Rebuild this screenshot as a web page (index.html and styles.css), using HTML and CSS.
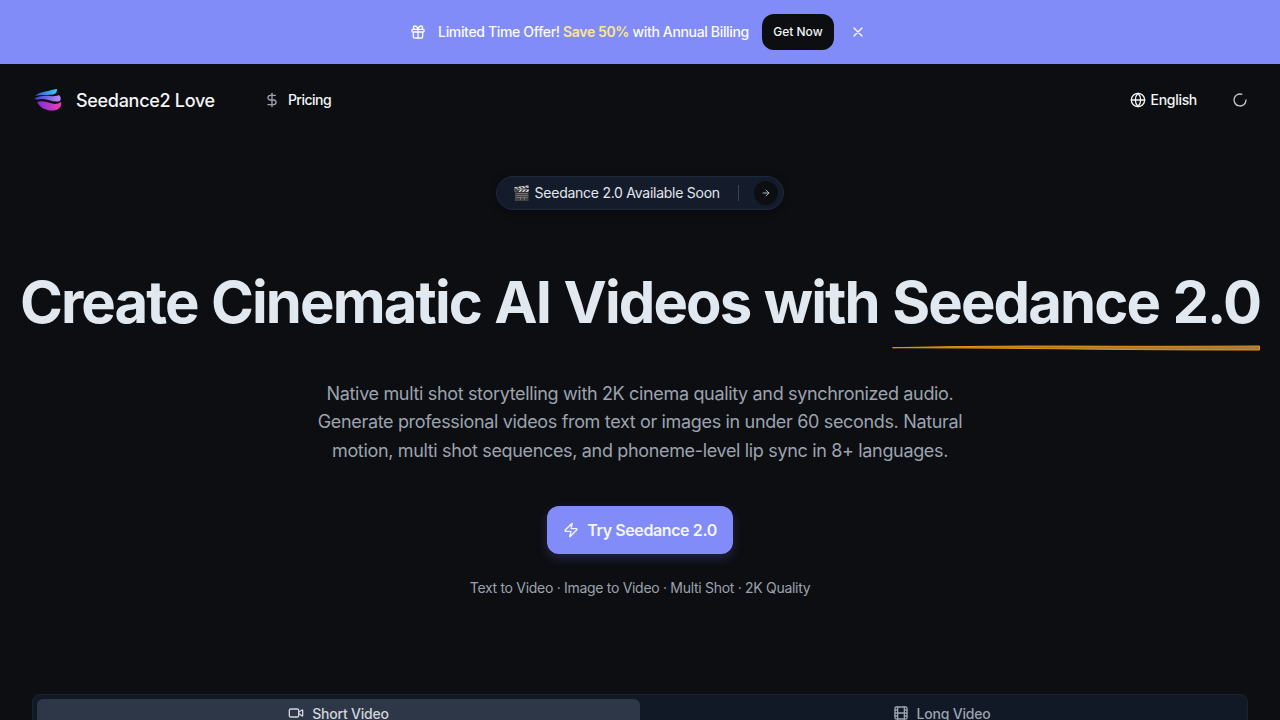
FILE: index.html
```html
<!DOCTYPE html>
<html lang="en">
<head>
<meta charset="utf-8">
<title>Seedance2 Love</title>
<link rel="stylesheet" href="styles.css">
</head>
<body>
<div class="promo">
  <svg class="promo-gift" width="16" height="16" viewBox="0 0 24 24" fill="none" stroke="currentColor" stroke-width="2" stroke-linecap="round" stroke-linejoin="round"><rect x="3" y="8" width="18" height="4" rx="1"/><path d="M12 8v13"/><path d="M19 12v7a2 2 0 0 1-2 2H7a2 2 0 0 1-2-2v-7"/><path d="M7.5 8a2.5 2.5 0 0 1 0-5A4.8 8 0 0 1 12 8a4.8 8 0 0 1 4.500-5 2.500 2.500 0 0 1 0 5"/></svg>
  <span class="promo-text">Limited Time Offer! <b>Save 50%</b> with Annual Billing</span>
  <a class="promo-btn">Get Now</a>
  <svg class="promo-x" width="16" height="16" viewBox="0 0 24 24" fill="none" stroke="currentColor" stroke-width="2" stroke-linecap="round"><path d="M18 6 6 18M6 6l12 12"/></svg>
</div>
<header class="nav">
  <div class="nav-left">
    <a class="brand">
      <svg class="logo" width="32" height="32" viewBox="0 0 32 32">
        <defs>
          <linearGradient id="g1" x1="0" y1="0" x2="1" y2="0"><stop offset="0" stop-color="#3b4fe0"/><stop offset="1" stop-color="#2fd0f5"/></linearGradient>
          <linearGradient id="g2" x1="0" y1="0" x2="1" y2="0"><stop offset="0" stop-color="#2d3fd8"/><stop offset="1" stop-color="#c08bf5"/></linearGradient>
          <linearGradient id="g3" x1="0" y1="0" x2="1" y2="0"><stop offset="0" stop-color="#7a2be0"/><stop offset="1" stop-color="#f43fb0"/></linearGradient>
        </defs>
        <path fill="url(#g1)" d="M3 12C7 8 12 8 16 7c4-1 6-2 9-2 0 3-1 5-4 5.500C15 11.500 8 10 3 12z"/>
        <path fill="url(#g2)" d="M2 15C7 11 13 11.500 18 12c4 .5 7 0 9-1 2 2 2 4 1 6-6 2-12-2-17-2-3 0-6 1-9 0z"/>
        <path fill="url(#g3)" d="M5 18c5-2 10 0 15 1.500 3 1 6 .5 9-1.500 1 3-1 7-5 8-7 2-15-1-19-8z"/>
      </svg>
      <span class="brand-name">Seedance2 Love</span>
    </a>
    <a class="nav-link">
      <svg width="16" height="16" viewBox="0 0 24 24" fill="none" stroke="currentColor" stroke-width="2" stroke-linecap="round" stroke-linejoin="round"><path d="M12 2v20"/><path d="M17 5H9.500a3.500 3.500 0 0 0 0 7h5a3.500 3.500 0 0 1 0 7H6"/></svg>
      <span>Pricing</span>
    </a>
  </div>
  <div class="nav-right">
    <a class="lang">
      <svg width="16" height="16" viewBox="0 0 24 24" fill="none" stroke="currentColor" stroke-width="2" stroke-linecap="round" stroke-linejoin="round"><circle cx="12" cy="12" r="10"/><path d="M12 2a14.500 14.500 0 0 0 0 20 14.500 14.500 0 0 0 0-20"/><path d="M2 12h20"/></svg>
      <span>English</span>
    </a>
    <svg class="spinner" width="16" height="16" viewBox="0 0 24 24" fill="none" stroke="currentColor" stroke-width="2" stroke-linecap="round"><path d="M21 12a9 9 0 1 1-6.200-8.560"/></svg>
  </div>
</header>
<main class="hero">
  <a class="pill">
    <span class="pill-text"><span class="pill-emoji">🎬</span> Seedance 2.0 Available Soon</span>
    <span class="pill-sep"></span>
    <span class="pill-arrow"><svg width="10" height="10" viewBox="0 0 24 24" fill="none" stroke="currentColor" stroke-width="2" stroke-linecap="round" stroke-linejoin="round"><path d="M5 12h14M12 5l7 7-7 7"/></svg></span>
  </a>
  <h1 class="title">Create Cinematic AI Videos with <span class="title-mark">Seedance 2.0<svg class="underline" viewBox="0 0 368 6" preserveAspectRatio="none"><path d="M.5 2.700C60 1.500 120 .8 180 1.100S300 1.400 367.500 1V5C300 5 240 4.700 180 3.900S60 2.900.5 2.700z" fill="#a67c45" stroke="#e8930f" stroke-width="1"/></svg></span></h1>
  <p class="lead">Native multi shot storytelling with 2K cinema quality and synchronized audio.<br>Generate professional videos from text or images in under 60 seconds. Natural<br>motion, multi shot sequences, and phoneme-level lip sync in 8+ languages.</p>
  <a class="cta">
    <svg width="16" height="16" viewBox="0 0 24 24" fill="none" stroke="currentColor" stroke-width="2" stroke-linecap="round" stroke-linejoin="round"><path d="M4 14a1 1 0 0 1-.780-1.630l9.900-10.200a.500.500 0 0 1 .860.460l-1.920 6.020A1 1 0 0 0 13 10h7a1 1 0 0 1 .780 1.630l-9.900 10.200a.500.500 0 0 1-.860-.460l1.920-6.020A1 1 0 0 0 11 14z"/></svg>
    <span>Try Seedance 2.0</span>
  </a>
  <p class="features">Text to Video · Image to Video · Multi Shot · 2K Quality</p>
</main>
<section class="tabs">
  <div class="tab tab-active">
    <svg width="16" height="16" viewBox="0 0 24 24" fill="none" stroke="currentColor" stroke-width="2" stroke-linecap="round" stroke-linejoin="round"><path d="m16 13 5.200 3.500a.500.500 0 0 0 .800-.430V7.870a.500.500 0 0 0-.750-.430L16 10.500"/><rect x="2" y="6" width="14" height="12" rx="2"/></svg>
    <span>Short Video</span>
  </div>
  <div class="tab">
    <svg width="16" height="16" viewBox="0 0 24 24" fill="none" stroke="currentColor" stroke-width="2" stroke-linecap="round" stroke-linejoin="round"><rect x="3" y="3" width="18" height="18" rx="2"/><path d="M7 3v18M17 3v18M3 12h18M3 7.500h4M3 16.500h4M17 7.500h4M17 16.500h4"/></svg>
    <span>Long Video</span>
  </div>
</section>
</body>
</html>
```
FILE: styles.css
```css
* { box-sizing: border-box; }
html, body { margin: 0; height: 720px; overflow: hidden; }
body { background: #0c0e12; color: #f4f5f7; font-family: Inter, "Liberation Sans", sans-serif; }
a { color: inherit; text-decoration: none; }
svg { display: block; flex: none; }

.promo { height: 64px; padding-right: 4px; background: #818cf8; display: flex; align-items: center; justify-content: center; font-size: 14px; color: #fafaff; }
.promo-gift { margin-right: 12px; }
.promo-text { padding-bottom: 1px; letter-spacing: -.34px; font-weight: 500; }
.promo-text b { color: #fde68a; font-weight: 600; }
.promo-btn { margin-left: 13px; height: 36px; width: 72px; padding-bottom: 1px; background: #0c0e12; border-radius: 12px; display: flex; align-items: center; justify-content: center; font-size: 12px; font-weight: 500; color: #f4f5f7; }
.promo-x { margin-left: 16px; }

.nav { height: 72px; padding: 0 32px; display: flex; align-items: center; justify-content: space-between; }
.nav-left, .nav-right, .brand, .nav-link, .lang { display: flex; align-items: center; }
.brand { gap: 12px; }
.brand-name { font-size: 18px; font-weight: 500; letter-spacing: -.3px; }
.nav-left { gap: 49px; }
.nav-link { gap: 8px; font-size: 14px; font-weight: 500; }
.nav-link span { padding-bottom: 1px; letter-spacing: -.5px; }
.nav-link svg { color: #9ca3af; }
.lang { gap: 5px; font-size: 14px; font-weight: 500; }
.lang span { padding-bottom: 1px; letter-spacing: -.3px; }
.nav-right { gap: 35px; }
.spinner { color: #c4c7cc; }

.hero { display: flex; flex-direction: column; align-items: center; }
.pill { margin-top: 40px; height: 34px; padding: 0 5px 0 16px; display: flex; align-items: center; border-radius: 17px; background: #141c2b; border: 1px solid #1e293b; box-shadow: 0 2px 8px rgba(0,0,0,.4); font-size: 14px; }
.pill-text { padding-bottom: 1px; color: #e5e7eb; letter-spacing: -.26px; }
.pill-emoji { margin-right: 1px; }
.pill-sep { width: 1px; height: 16px; background: #374151; margin: 0 15px 0 18px; }
.pill-arrow { width: 24px; height: 24px; border-radius: 50%; background: #0c0e12; display: flex; align-items: center; justify-content: center; color: #d1d5db; }

.title { margin: 56px 0 0; font-size: 58px; line-height: 72px; font-weight: 700; letter-spacing: -1.9px; word-spacing: 1.6px; color: #e2e8f0; white-space: nowrap; }
.title-mark { position: relative; display: inline-block; }
.underline { position: absolute; left: 0; top: 79px; width: 368px; height: 6px; }

.lead { margin: 41.500px 0 0; text-align: center; font-size: 18px; line-height: 28.800px; letter-spacing: -.34px; color: #9ca3af; }

.cta { margin-top: 40.500px; height: 48px; padding: 0 16px; display: flex; align-items: center; gap: 8px; background: #818cf8; border-radius: 12px; box-shadow: 0 4px 12px rgba(129,140,248,.2); font-size: 16px; font-weight: 600; letter-spacing: -.4px; color: #f4f5ff; }
.cta span { padding-bottom: 1px; }
.features { margin: 24px 0 0; font-size: 14px; line-height: 20px; letter-spacing: -.3px; color: #9ca3af; }

.tabs { margin: 96px 32px 0; height: 60px; padding: 4px; display: grid; grid-template-columns: 1fr 1fr; background: #111927; border: 1px solid #1a2332; border-radius: 8px; }
.tab { height: 28px; border-radius: 6px; display: flex; align-items: center; justify-content: center; gap: 8px; font-size: 14px; font-weight: 500; letter-spacing: -.2px; color: #9ca3af; }
.tab-active { height: 48px; padding-bottom: 20px; background: #2e3748; color: #d1d5db; }
```
